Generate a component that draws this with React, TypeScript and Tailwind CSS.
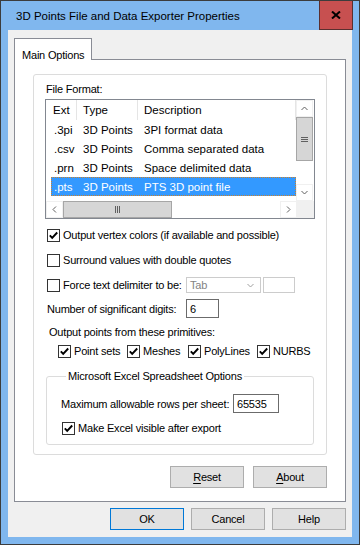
import React from 'react';

const MS = "font-['Liberation_Sans',Arial,sans-serif] text-[11px] leading-[14px] tracking-[-0.2px]";
const UI = "font-['Liberation_Sans',Arial,sans-serif] text-[11.5px] leading-[14px]";

const rows = [
  ['.3pi', '3D Points', '3PI format data'],
  ['.csv', '3D Points', 'Comma separated data'],
  ['.prn', '3D Points', 'Space delimited data'],
  ['.pts', '3D Points', 'PTS 3D point file'],
];

function Box({ checked }: { checked: boolean }) {
  return (
    <svg width="13" height="13" viewBox="0 0 13 13" className="shrink-0">
      <rect x="0.5" y="0.5" width="12" height="12" fill="#fff" stroke="#333" />
      {checked && <path d="M2.8 6.3 5.2 8.9 10.2 3.5" fill="none" stroke="#000" strokeWidth="1.9" />}
    </svg>
  );
}

function CheckItem({ checked, label, className = '' }: { checked: boolean; label: string; className?: string }) {
  return (
    <div className={`flex h-[16px] items-center ${className}`}>
      <Box checked={checked} />
      <span className={`ml-[3px] whitespace-nowrap ${MS}`}>{label}</span>
    </div>
  );
}

function Chevron({ dir }: { dir: 'up' | 'down' | 'left' | 'right' }) {
  const d = {
    up: 'M0.5 4 L3.5 1 L6.5 4',
    down: 'M0.5 1 L3.5 4 L6.5 1',
    left: 'M4 0.5 L1 3.5 L4 6.5',
    right: 'M1 0.5 L4 3.5 L1 6.5',
  }[dir];
  const vertical = dir === 'up' || dir === 'down';
  return (
    <svg width={vertical ? 7 : 5} height={vertical ? 5 : 7} viewBox={vertical ? '0 0 7 5' : '0 0 5 7'}>
      <path d={d} fill="none" stroke="#606060" strokeWidth="1" />
    </svg>
  );
}

function ListView() {
  return (
    <div className="flex h-[120px] w-[270px] flex-col border border-[#828790] bg-white">
      <div className="flex h-[101px]">
        <div className={`w-[250px] ${UI}`}>
          <div className="flex h-[20px]">
            <div className="flex w-[31px] items-center border-r border-[#e5e5e5] pl-[7px]">Ext</div>
            <div className="flex w-[61px] items-center border-r border-[#e5e5e5] pl-[6px]">Type</div>
            <div className="flex w-[158px] items-center border-r border-[#e5e5e5] pl-[6px]">Description</div>
          </div>
          {rows.map((r, i) => {
            const sel = i === 3;
            return (
              <div
                key={r[0]}
                className={`ml-[5px] flex h-[19px] w-[245px] items-center border border-dotted ${
                  sel ? 'border-[#c8812f] bg-[#3399ff] text-white' : 'border-transparent'
                }`}
              >
                <div className="w-[25px] pl-[2px]">{r[0]}</div>
                <div className="w-[61px] pl-[6px]">{r[1]}</div>
                <div className="pl-[6px]">{r[2]}</div>
              </div>
            );
          })}
        </div>
        <div className="flex w-[17px] flex-col bg-white">
          <div className="flex h-[17px] items-center justify-center border border-[#f0f0f0]">
            <Chevron dir="up" />
          </div>
          <div className="flex h-[44px] flex-col items-center justify-center gap-[1px] border border-[#a6a6a6] bg-[#d6d6d6]">
            <div className="h-px w-[7px] bg-[#606060]" />
            <div className="h-px w-[7px] bg-[#606060]" />
            <div className="h-px w-[7px] bg-[#606060]" />
          </div>
          <div className="flex-1" />
          <div className="flex h-[17px] items-center justify-center border border-[#f0f0f0]">
            <Chevron dir="down" />
          </div>
        </div>
      </div>
      <div className="flex h-[17px]">
        <div className="flex w-[17px] items-center justify-center border border-[#f0f0f0]">
          <Chevron dir="left" />
        </div>
        <div className="flex w-[109px] items-center justify-center gap-[1px] border border-[#a6a6a6] bg-[#d6d6d6]">
          <div className="h-[7px] w-px bg-[#606060]" />
          <div className="h-[7px] w-px bg-[#606060]" />
          <div className="h-[7px] w-px bg-[#606060]" />
        </div>
        <div className="flex-1" />
        <div className="flex w-[17px] items-center justify-center border border-[#f0f0f0]">
          <Chevron dir="right" />
        </div>
        <div className="w-[17px] bg-[#f0f0f0]" />
      </div>
    </div>
  );
}

function Button({ children, def = false }: { children: React.ReactNode; def?: boolean }) {
  return (
    <div
      className={`flex h-[22px] w-[74px] items-center justify-center border bg-[#e1e1e1] ${
        def ? 'border-[#0078d7]' : 'border-[#adadad]'
      } ${MS}`}
    >
      {children}
    </div>
  );
}

export default function App() {
  return (
    <div className="flex h-[545px] w-[360px] flex-col border border-[#3c3c3c] bg-[#80b7ee] text-black">
      <div className="flex h-[29px] shrink-0">
        <div className={`flex-1 pl-[15px] pt-[8px] ${UI}`}>3D Points File and Data Exporter Properties</div>
        <div className="mr-[6px] flex h-[29px] w-[34px] items-center justify-center border-x border-b border-[#5a2f2f] bg-[#c75050]">
          <svg width="10" height="8" viewBox="0 0 10 8">
            <path d="M1 0.5 L9 7.5 M9 0.5 L1 7.5" stroke="#000" strokeWidth="2" />
          </svg>
        </div>
      </div>

      <div className="mx-[7px] mb-[7px] flex flex-1 flex-col bg-[#f0f0f0] px-[6px] pt-[8px]">
        <div className="relative z-10 -mb-px h-[22px] w-[78px] border-x border-t border-[#898c95] bg-white pl-[7px] pt-[2px]">
          <span className={MS}>Main Options</span>
        </div>
        <div className="flex flex-col border border-[#898c95] bg-white px-[18px] pb-[13px] pt-[14px]">
          <div className="flex flex-col rounded-[3px] border border-[#dcdcdc] px-[11px] pb-[9px] pt-[7px]">
            <div className={`ml-[1px] h-[14px] ${MS}`}>File Format:</div>
            <div className="mt-[3px]">
              <ListView />
            </div>
            <CheckItem checked label="Output vertex colors (if available and possible)" className="ml-[2px] mt-[8px]" />
            <CheckItem checked={false} label="Surround values with double quotes" className="ml-[2px] mt-[9px]" />
            <div className="ml-[2px] mt-[9px] flex h-[16px] items-center">
              <CheckItem checked={false} label="Force text delimiter to be:" className="w-[139px]" />
              <div className="flex h-[16px] w-[75px] items-center justify-between border border-[#cccccc] bg-white pl-[3px] pr-[6px]">
                <span className={`${MS} text-[#838383]`}>Tab</span>
                <svg width="7" height="5" viewBox="0 0 7 5">
                  <path d="M0.5 1 L3.5 4 L6.5 1" fill="none" stroke="#a0a0a0" strokeWidth="1" />
                </svg>
              </div>
              <div className="ml-[2px] h-[16px] w-[32px] border border-[#cccccc] bg-white" />
            </div>
            <div className="ml-[2px] mt-[6px] flex h-[19px] items-center">
              <div className={`w-[139px] whitespace-nowrap ${MS}`}>Number of significant digits:</div>
              <div className={`flex h-[19px] w-[33px] items-center border border-[#6b6b6b] pl-[3px] ${MS}`}>6</div>
            </div>
            <div className={`ml-[4px] mt-[7px] h-[14px] ${MS}`}>Output points from these primitives:</div>
            <div className="ml-[13px] mt-[4px] flex h-[16px]">
              <CheckItem checked label="Point sets" className="w-[69px]" />
              <CheckItem checked label="Meshes" className="w-[61px]" />
              <CheckItem checked label="PolyLines" className="w-[69px]" />
              <CheckItem checked label="NURBS" />
            </div>
            <fieldset className="mx-[1px] mt-[10px] rounded-[3px] border border-[#dcdcdc] pb-[8px] pl-[14px]">
              <legend className={`ml-[5px] px-[2px] ${MS}`}>Microsoft Excel Spreadsheet Options</legend>
              <div className="mt-[11px] flex h-[19px] items-center">
                <div className={`w-[172px] whitespace-nowrap ${MS}`}>Maximum allowable rows per sheet:</div>
                <div className={`flex h-[19px] w-[46px] items-center border border-[#6b6b6b] pl-[3px] ${MS}`}>65535</div>
              </div>
              <CheckItem checked label="Make Excel visible after export" className="ml-[1px] mt-[7px]" />
            </fieldset>
          </div>
          <div className="mt-[11px] flex justify-end gap-[9px]">
            <Button>
              <span className="underline underline-offset-[2px]">R</span>eset
            </Button>
            <Button>
              <span className="underline underline-offset-[2px]">A</span>bout
            </Button>
          </div>
        </div>
        <div className="mt-[6px] flex justify-end gap-[7px]">
          <Button def>OK</Button>
          <Button>Cancel</Button>
          <Button>Help</Button>
        </div>
      </div>
    </div>
  );
}
